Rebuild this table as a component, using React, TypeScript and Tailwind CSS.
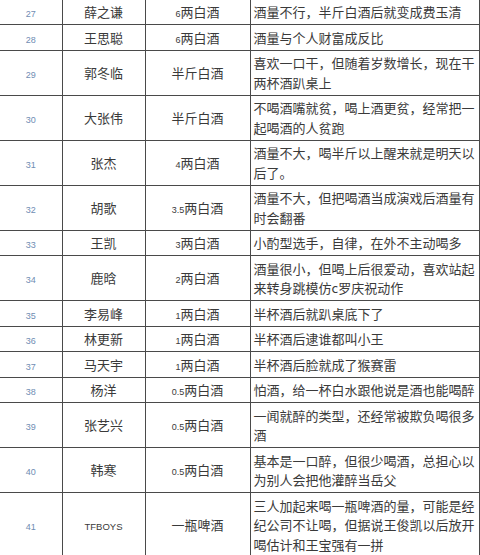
type Row = {
    no: number;
    name: string;
    amount?: string;
    unit: string;
    note: string;
};

const rows: Row[] = [
    { no: 27, name: "薛之谦", amount: "6", unit: "两白酒", note: "酒量不行，半斤白酒后就变成费玉清" },
    { no: 28, name: "王思聪", amount: "6", unit: "两白酒", note: "酒量与个人财富成反比" },
    { no: 29, name: "郭冬临", unit: "半斤白酒", note: "喜欢一口干，但随着岁数增长，现在干两杯酒趴桌上" },
    { no: 30, name: "大张伟", unit: "半斤白酒", note: "不喝酒嘴就贫，喝上酒更贫，经常把一起喝酒的人贫跑" },
    { no: 31, name: "张杰", amount: "4", unit: "两白酒", note: "酒量不大，喝半斤以上醒来就是明天以后了。" },
    { no: 32, name: "胡歌", amount: "3.5", unit: "两白酒", note: "酒量不大，但把喝酒当成演戏后酒量有时会翻番" },
    { no: 33, name: "王凯", amount: "3", unit: "两白酒", note: "小酌型选手，自律，在外不主动喝多" },
    { no: 34, name: "鹿晗", amount: "2", unit: "两白酒", note: "酒量很小，但喝上后很爱动，喜欢站起来转身跳模仿c罗庆祝动作" },
    { no: 35, name: "李易峰", amount: "1", unit: "两白酒", note: "半杯酒后就趴桌底下了" },
    { no: 36, name: "林更新", amount: "1", unit: "两白酒", note: "半杯酒后逮谁都叫小王" },
    { no: 37, name: "马天宇", amount: "1", unit: "两白酒", note: "半杯酒后脸就成了猴赛雷" },
    { no: 38, name: "杨洋", amount: "0.5", unit: "两白酒", note: "怕酒，给一杯白水跟他说是酒也能喝醉" },
    { no: 39, name: "张艺兴", amount: "0.5", unit: "两白酒", note: "一闻就醉的类型，还经常被欺负喝很多酒" },
    { no: 40, name: "韩寒", amount: "0.5", unit: "两白酒", note: "基本是一口醉，但很少喝酒，总担心以为别人会把他灌醉当岳父" },
    { no: 41, name: "TFBOYS", unit: "一瓶啤酒", note: "三人加起来喝一瓶啤酒的量，可能是经纪公司不让喝，但据说王俊凯以后放开喝估计和王宝强有一拼" },
];

const latin = { fontFamily: '"Liberation Sans", Arial, sans-serif' };

export default function App() {
    return (
        <div
            className="w-[480px] h-[555px] overflow-hidden bg-white text-[#3a3a3a]"
            style={{ fontFamily: '"Noto Sans CJK SC", sans-serif' }}
        >
            <table className="border-collapse table-fixed w-[479px] text-[13px] leading-[19.5px]">
                <colgroup>
                    <col className="w-[62px]" />
                    <col className="w-[83px]" />
                    <col className="w-[105px]" />
                    <col className="w-[229px]" />
                </colgroup>
                <tbody>
                    {rows.map((row, i) => {
                        const first = i === 0;
                        const cell = first
                            ? "border border-[#4a4a4a] border-t-0 pt-[2px] pb-[2.5px]"
                            : "border border-[#4a4a4a] py-[2.5px]";
                        return (
                            <tr key={row.no}>
                                <td className={`${cell} border-l-0 text-center`}>
                                    <span className="text-[9px] leading-none text-[#6f8db3]" style={latin}>
                                        {row.no}
                                    </span>
                                </td>
                                <td className={`${cell} text-center`}>
                                    {row.name === "TFBOYS" ? (
                                        <span className="text-[9.5px] leading-none" style={latin}>{row.name}</span>
                                    ) : (
                                        row.name
                                    )}
                                </td>
                                <td className={`${cell} text-center`}>
                                    {row.amount && (
                                        <span className="text-[9px] leading-none" style={latin}>{row.amount}</span>
                                    )}
                                    {row.unit}
                                </td>
                                <td className={`${cell} pl-[3px] pr-[2px] text-left`}>
                                    {row.note}
                                </td>
                            </tr>
                        );
                    })}
                </tbody>
            </table>
        </div>
    );
}
